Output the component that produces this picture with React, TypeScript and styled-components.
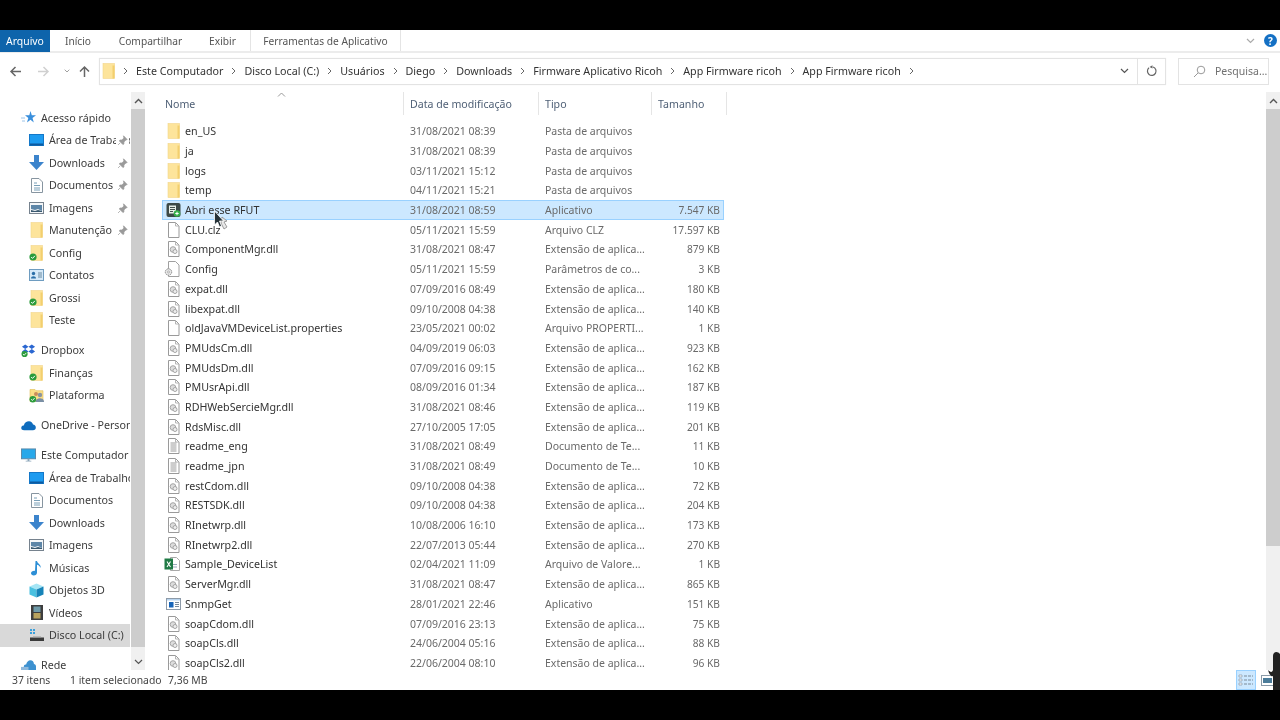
import React from "react";
import styled, { createGlobalStyle } from "styled-components";

const Global = createGlobalStyle`
  html, body { margin: 0; padding: 0; background: #000; }
  body { font-family: "Noto Sans", "Open Sans", "Liberation Sans", sans-serif; }
  * { box-sizing: border-box; }
`;

const Page = styled.div`
  width: 1280px; height: 720px; display: flex; flex-direction: column; overflow: hidden; background: #000; position: relative;
`;
const Letterbox = styled.div<{ $h: number }>`
  height: ${p => p.$h}px; flex: none; background: #000;
`;
const Win = styled.div`
  flex: 1; min-height: 0; display: flex; flex-direction: column; background: #fff; color: #3c3c3c; font-size: 10.7px; position: relative; filter: blur(0.25px);
`;
const TabBar = styled.div`
  height: 23px; flex: none; display: flex; align-items: stretch; border-bottom: 2px solid #ececec; position: relative;
`;
const FileTab = styled.div`
  width: 50px; height: 22px; background: #0e64ab; color: #fff; font-size: 10.4px; display: flex; align-items: center; justify-content: center;
`;
const Tab = styled.div<{ $w: number; $sep?: boolean }>`
  width: ${p => p.$w}px; display: flex; align-items: center; justify-content: center; font-size: 10.2px; color: #555; height: 21px;
  border-right: ${p => (p.$sep ? "1px solid #e4e4e4" : "none")};
`;
const RibbonEnd = styled.div`
  margin-left: auto; display: flex; align-items: center; gap: 9px; padding-right: 3px; height: 21px;
`;
const HelpDot = styled.div`
  width: 13px; height: 13px; border-radius: 50%; background: #1470c4; color: #fff; font-size: 10px; font-weight: 700; display: flex; align-items: center; justify-content: center;
`;
const NavRow = styled.div`
  height: 39px; flex: none; display: flex; align-items: center; padding: 0 11px 3px 9px;
`;
const NavButtons = styled.div`
  width: 90px; flex: none; display: flex; align-items: center; gap: 0;
`;
const NavBtn = styled.div<{ $w: number }>`
  width: ${p => p.$w}px; display: flex; justify-content: center; align-items: center;
`;
const AddressBox = styled.div`
  width: 1067px; height: 27px; flex: none; border: 1px solid #e3e3e3; display: flex; align-items: center; box-shadow: 0 0 1px #eee;
`;
const FolderSlot = styled.div`
  width: 17px; margin-left: 1px; flex: none; display: flex;
`;
const Crumbs = styled.div`
  flex: 1; display: flex; align-items: center; gap: 7px; padding-left: 4px; font-size: 10.7px; color: #333; white-space: nowrap;
`;
const Chev = styled.span`
  display: inline-flex; width: 7px; justify-content: center;
`;
const AddrChevron = styled.div`
  width: 27px; height: 25px; display: flex; align-items: center; justify-content: center; border-right: 1px solid #e3e3e3;
`;
const Refresh = styled.div`
  width: 27px; height: 25px; display: flex; align-items: center; justify-content: center;
`;
const SearchBox = styled.div`
  margin-left: 12px; width: 91px; height: 27px; border: 1px solid #e3e3e3; display: flex; align-items: center; padding-left: 14px; gap: 9px; font-size: 10.5px; color: #707070; white-space: nowrap; overflow: hidden;
`;
const Main = styled.div`
  flex: 1; min-height: 0; display: flex;
`;
const Sidebar = styled.div`
  width: 131px; flex: none; padding-top: 14.5px; overflow: hidden;
`;
const NavGroup = styled.div`
  margin-bottom: 7.5px;
`;
const NavItem = styled.div<{ $level: number; $active?: boolean }>`
  height: 22.5px; width: 130px; display: flex; align-items: center; gap: 5px; white-space: nowrap; overflow: hidden; position: relative;
  padding-left: ${p => (p.$level === 1 ? 21 : 29)}px; background: ${p => (p.$active ? "#d9d9d9" : "transparent")};
`;
const IconSlot = styled.span`
  width: 15px; height: 16px; flex: none; display: inline-flex; align-items: center; justify-content: center;
`;
const Pin = styled.span`
  position: absolute; left: 116px; top: 5px; width: 13px; height: 13px; background: #fff; display: flex; align-items: center; justify-content: center;
`;
const Scroll = styled.div<{ $w: number }>`
  width: ${p => p.$w}px; flex: none; background: #f0f0f0; display: flex; flex-direction: column; align-items: stretch;
`;
const ScrollArrow = styled.div`
  height: 17px; flex: none; display: flex; align-items: center; justify-content: center;
`;
const ScrollThumb = styled.div<{ $h: number }>`
  height: ${p => p.$h}px; flex: none; background: #cdcdcd;
`;
const ScrollRest = styled.div`
  flex: 1;
`;
const ListPane = styled.div`
  flex: 1; min-width: 0; display: flex; flex-direction: column; overflow: hidden;
`;
const Header = styled.div`
  height: 25px; flex: none; padding-left: 20px; display: grid; grid-template-columns: 239px 135px 113px 75px; align-items: stretch; font-size: 10.6px; position: relative; width: 583px;
`;
const HeadCell = styled.div`
  display: flex; align-items: center; padding-left: 6px; border-right: 1px solid #e5e5e5; height: 23px; color: #4e5f75;
  &:first-child { padding-left: 0; }
`;
const SortCaret = styled.span`
  position: absolute; left: 132px; top: 0; line-height: 0;
`;
const Rows = styled.div`
  padding: 4.500px 0 0 17px;
`;
const Row = styled.div<{ $sel?: boolean }>`
  width: 562px; height: 19.7px; display: grid; grid-template-columns: 23px 225px 135px 115px 60px; align-items: center; white-space: nowrap;
  background: ${p => (p.$sel ? "#cce8ff" : "transparent")}; outline: ${p => (p.$sel ? "1px solid #99d1ff" : "none")}; outline-offset: -1px;
`;
const RowIcon = styled.span`
  display: flex; padding-left: 4px; height: 16px; align-items: center;
`;
const Name = styled.span`
  color: #333; font-size: 10.7px;
`;
const Dim = styled.span`
  color: #6a6a6a; font-size: 10.5px; overflow: hidden;
`;
const Size = styled(Dim)`
  text-align: right; font-size: 10.2px;
`;
const Status = styled.div`
  height: 20px; flex: none; display: flex; align-items: center; padding-left: 12px; font-size: 10.4px; color: #444; position: relative;
`;
const StatusCount = styled.span`
  width: 58px;
`;
const StatusSel = styled.span`
  width: 98px; white-space: nowrap;
`;
const ViewBtns = styled.div`
  margin-left: auto; display: flex; align-items: center; gap: 4px; padding-right: 6px; height: 20px;
`;
const ViewBtn = styled.div<{ $on?: boolean }>`
  width: ${p => (p.$on ? 20 : 14)}px; height: 20px; display: flex; align-items: center; justify-content: center;
  background: ${p => (p.$on ? "#cce8ff" : "transparent")}; border: ${p => (p.$on ? "1px solid #99d1ff" : "none")};
`;
const CursorOverlay = styled.svg`
  position: absolute; left: 213px; top: 210px; z-index: 5;
`;
const CornerOverlay = styled.svg`
  position: absolute; left: 1268px; top: 650px; z-index: 5;
`;

const Folder = ({ check }: { check?: boolean }) => (
  <svg width="15" height="16" viewBox="0 0 15 16">
    <rect x="2" y="0.500" width="11.500" height="15" fill="#fde49b" stroke="#f2d68a" strokeWidth=".6" />
    <rect x="11.500" y="2.500" width="2" height="13" fill="#f3cf6e" />
    {check && <Check />}
  </svg>
);
const Check = () => (
  <g>
    <circle cx="4" cy="12" r="3.600" fill="#2c9c3c" />
    <path d="M2.200 12l1.300 1.400 2.400-2.600" fill="none" stroke="#fff" strokeWidth="1" />
  </g>
);
const Doc = ({ children }: { children?: React.ReactNode }) => (
  <svg width="15" height="16" viewBox="0 0 15 16">
    <path d="M2.500 .5h7l3.500 3.500v11.500h-10.500z" fill="#fff" stroke="#9a9a9a" />
    <path d="M9.500 .5v3.500h3.500" fill="none" stroke="#b5b5b5" />
    {children}
  </svg>
);
const Dll = () => (
  <Doc>
    <circle cx="7" cy="8.500" r="2.800" fill="#ddd" stroke="#a5a5a5" />
    <circle cx="9" cy="10.500" r="2" fill="#eee" stroke="#a5a5a5" />
  </Doc>
);
const Txt = () => (
  <Doc>
    <path d="M4.500 5h6M4.500 7h6M4.500 9h6M4.500 11h6M4.500 13h6" stroke="#9a9a9a" />
  </Doc>
);
const Cfg = () => (
  <svg width="17" height="16" viewBox="0 0 17 16" style={{ marginLeft: -2 }}>
    <path d="M4.500 .5h7l3.500 3.500v11.500h-10.500z" fill="#fff" stroke="#a0a0a0" />
    <circle cx="4.500" cy="11" r="3.200" fill="#e8e8e8" stroke="#8a8a8a" strokeDasharray="1.500 .7" />
    <circle cx="4.500" cy="11" r="1" fill="#fff" stroke="#8a8a8a" strokeWidth=".6" />
  </svg>
);
const AppDark = () => (
  <svg width="15" height="16" viewBox="0 0 15 16">
    <rect x=".5" y="1" width="14" height="14" rx="2" fill="#3d4a48" />
    <rect x="3" y="3.500" width="7" height="8" fill="#e8efe8" />
    <path d="M4 5.500h5M4 7.500h5M4 9.500h3" stroke="#45534f" />
    <circle cx="11" cy="11.500" r="3.300" fill="#35b04a" />
    <path d="M9.300 11.500h3.400M11 9.800v3.400" stroke="#fff" />
  </svg>
);
const Excel = () => (
  <svg width="17" height="16" viewBox="0 0 17 16" style={{ marginLeft: -2 }}>
    <path d="M6.500 1.500h6l3 3v10h-9z" fill="#fff" stroke="#a8a8a8" />
    <path d="M9 8.500h4M9 11h4" stroke="#9ab" />
    <rect x=".5" y="2.500" width="8.500" height="11" fill="#1f7a45" />
    <path d="M3 5.500l3.500 5.500M6.500 5.500l-3.500 5.500" stroke="#fff" strokeWidth="1.100" />
  </svg>
);
const Exe = () => (
  <svg width="15" height="14" viewBox="0 0 15 14">
    <rect x=".5" y="1.500" width="14" height="11" fill="#fff" stroke="#8d9aa8" />
    <rect x="1" y="2" width="13" height="1.500" fill="#b8d4ee" />
    <rect x="3" y="5" width="4.500" height="5.500" fill="#1764b8" />
    <path d="M9 5.500h4M9 7.500h4M9 9.500h4" stroke="#7a8a9a" />
  </svg>
);
const Desktop = () => (
  <svg width="15" height="12" viewBox="0 0 15 12">
    <rect x=".5" y=".5" width="14" height="11" fill="#1d9bf0" stroke="#1478c8" />
    <rect x="1" y="9.500" width="13" height="2" fill="#0d5aa0" />
  </svg>
);
const Down = () => (
  <svg width="15" height="15" viewBox="0 0 15 15">
    <path d="M5 0h5v7h5l-7.500 8-7.500-8h5z" fill="#3c84cc" />
  </svg>
);
const Docs = () => (
  <svg width="12" height="15" viewBox="0 0 12 15">
    <path d="M.5 .5h7.500l3.500 3.500v10.500h-11z" fill="#fff" stroke="#8795a0" />
    <path d="M3 5h3M3 7.500h6M3 10h6M3 12h6" stroke="#7aa0b8" />
  </svg>
);
const Images = () => (
  <svg width="15" height="12" viewBox="0 0 15 12">
    <rect x=".5" y=".5" width="14" height="11" fill="#f4f6f8" stroke="#76828e" />
    <path d="M2 3h11v6l-4-2-3 1-4-1z" fill="#5d86a8" />
    <path d="M2 8l4 1 3-1 4 1v1h-11z" fill="#39586f" />
  </svg>
);
const Contacts = () => (
  <svg width="15" height="12" viewBox="0 0 15 12">
    <rect x=".5" y=".5" width="14" height="11" fill="#d5e9f8" stroke="#6e9cc0" />
    <circle cx="4.500" cy="4.500" r="1.700" fill="#2a6fa8" />
    <path d="M2 9.500c0-3 5-3 5 0z" fill="#2a6fa8" />
    <path d="M9 4h4M9 6h4M9 8h4" stroke="#6a8aa0" />
  </svg>
);
const Dropbox = () => (
  <svg width="16" height="15" viewBox="0 0 16 15">
    <path d="M4.500 1L8 3.500 4.500 6 1 3.500zM11.500 1L15 3.500 11.500 6 8 3.500zM4.500 6L8 8.500 4.500 11 1 8.500zM11.500 6L15 8.500 11.500 11 8 8.500z" fill="#2b67d1" />
    <circle cx="3.800" cy="11.200" r="3.300" fill="#2c9c3c" />
    <path d="M2.200 11.200l1.200 1.300 2.200-2.400" fill="none" stroke="#fff" strokeWidth=".9" />
  </svg>
);
const People = () => (
  <svg width="15" height="16" viewBox="0 0 15 16">
    <path d="M1 2.500h5l1 1.200h7v10.800h-13z" fill="#fbdf86" stroke="#e0bd55" strokeWidth=".6" />
    <circle cx="7" cy="7" r="2" fill="#c98d5c" />
    <circle cx="11" cy="8" r="2.200" fill="#8b949e" />
    <path d="M6.500 15c0-5 9-5 8.500 0z" fill="#7a8fa5" />
    <circle cx="3.800" cy="12.200" r="3.300" fill="#2c9c3c" />
    <path d="M2.200 12.200l1.200 1.300 2.200-2.400" fill="none" stroke="#fff" strokeWidth=".9" />
  </svg>
);
const Cloud = () => (
  <svg width="16" height="11" viewBox="0 0 16 11">
    <path d="M3.500 10.500C1 10.500 0 9 .3 7.500.6 6 2 5.400 3 5.500 3.800 2.500 6 1 8.500 1c2.300 0 3.800 1.500 4.300 3.300 1.800.1 3 1.500 3 3.200 0 1.800-1.200 3-3 3z" fill="#0f6cbd" />
  </svg>
);
const Pc = () => (
  <svg width="16" height="15" viewBox="0 0 16 15">
    <rect x=".5" y=".5" width="15" height="10.500" fill="#28a8ea" stroke="#5a87a8" />
    <path d="M5 13h6v1h-6z M7 11h2v2h-2z" fill="#8ba6ba" />
  </svg>
);
const Music = () => (
  <svg width="13" height="16" viewBox="0 0 13 16">
    <path d="M5.500 1h1.500c.4 2.500 4.500 3.500 3.500 7-.5-2-2.200-3-3.500-3.200v8c0 1.500-1.500 2.700-3.200 2.700-1.700 0-2.800-1-2.800-2.200 0-1.400 1.500-2.500 3.300-2.500.3 0 .5 0 .7.100z" fill="#2d8fd6" />
  </svg>
);
const Cube = () => (
  <svg width="15" height="15" viewBox="0 0 15 15">
    <path d="M7.500 .5l7 3-7 3-7-3z" fill="#a5e5f5" />
    <path d="M.5 3.500l7 3v8l-7-3z" fill="#49c0e0" />
    <path d="M14.500 3.500l-7 3v8l7-3z" fill="#1683b8" />
  </svg>
);
const Film = () => (
  <svg width="12" height="15" viewBox="0 0 12 15">
    <rect x="0" y="0" width="12" height="15" fill="#3e3e3e" />
    <rect x="2.500" y="1.500" width="7" height="5.500" fill="#6f9aa8" />
    <rect x="2.500" y="8" width="7" height="5.500" fill="#b9a35e" />
  </svg>
);
const Disk = () => (
  <svg width="15" height="14" viewBox="0 0 15 14">
    <path d="M1 1h2v2h-2zM4 1h2v2h-2zM1 4h2v2h-2zM4 4h2v2h-2z" fill="#3ba0dc" />
    <rect x="1" y="9.500" width="14" height="3.500" fill="#3a3a3a" />
    <rect x="4" y="8.500" width="8" height="1" fill="#9a9a9a" />
  </svg>
);
const Net = () => (
  <svg width="16" height="13" viewBox="0 0 16 13">
    <path d="M3 12V7.500C3 5.500 5 5.500 5.500 5.500 6 3 8 1 10 1c2.300 0 3.800 1.800 3.800 4 1.200.3 2.200 1.200 2.200 2.600V12z" fill="#3d91d0" />
    <rect x="0" y="8" width="8" height="4" fill="#8fb9dc" />
  </svg>
);
const Star = () => (
  <svg width="15" height="15" viewBox="0 0 15 15">
    <path d="M9.500 1l1.300 4.300H15l-3.500 2.700 1.300 4.500-3.300-2.700-3.500 2.700 1.300-4.500L4 5.300h4.300z" fill="#3a8fdc" />
    <path d="M0 8h4M1 11h3" stroke="#9cc4e8" />
  </svg>
);
const PinGlyph = () => (
  <svg width="11" height="11" viewBox="0 0 11 11">
    <path d="M6.500 .8l3.700 3.700-1.300.5-2 2 0 2-1 .5-3.500-3.500.5-1 2-0 2-2z M3 8l-2 2" fill="#9a9a9a" stroke="#9a9a9a" strokeWidth=".7" />
  </svg>
);
const Sep = () => (
  <Chev>
    <svg width="5" height="8" viewBox="0 0 5 8"><path d="M1 1l3 3-3 3" fill="none" stroke="#666" /></svg>
  </Chev>
);
const Vee = ({ c = "#666", w = 9 }: { c?: string; w?: number }) => (
  <svg width={w} height="6" viewBox="0 0 9 6"><path d="M1 1l3.500 3.500L8 1" fill="none" stroke={c} strokeWidth="1.200" /></svg>
);
const Up = ({ c = "#555" }: { c?: string }) => (
  <svg width="9" height="6" viewBox="0 0 9 6"><path d="M1 5l3.500-3.500L8 5" fill="none" stroke={c} strokeWidth="1.400" /></svg>
);
const Arrow = ({ dir, c }: { dir: "l" | "r" | "u"; c: string }) => (
  <svg width="13" height="13" viewBox="0 0 13 13" style={{ transform: dir === "l" ? "none" : dir === "r" ? "rotate(180deg)" : "rotate(90deg)" }}>
    <path d="M12 6.500H2M6.500 2L2 6.500 6.500 11" fill="none" stroke={c} strokeWidth="1.500" />
  </svg>
);

const kinds: Record<string, React.ReactNode> = {
  f: <Folder />, c: <Doc />, d: <Dll />, t: <Txt />, g: <Cfg />, a: <AppDark />, x: <Excel />, e: <Exe />,
};

const files: [string, string, string, string, string, string?][] = [
  ["f", "en_US", "31/08/2021 08:39", "Pasta de arquivos", ""],
  ["f", "ja", "31/08/2021 08:39", "Pasta de arquivos", ""],
  ["f", "logs", "03/11/2021 15:12", "Pasta de arquivos", ""],
  ["f", "temp", "04/11/2021 15:21", "Pasta de arquivos", ""],
  ["a", "Abri esse RFUT", "31/08/2021 08:59", "Aplicativo", "7.547 KB", "s"],
  ["c", "CLU.clz", "05/11/2021 15:59", "Arquivo CLZ", "17.597 KB"],
  ["d", "ComponentMgr.dll", "31/08/2021 08:47", "Extensão de aplica...", "879 KB"],
  ["g", "Config", "05/11/2021 15:59", "Parâmetros de co...", "3 KB"],
  ["d", "expat.dll", "07/09/2016 08:49", "Extensão de aplica...", "180 KB"],
  ["d", "libexpat.dll", "09/10/2008 04:38", "Extensão de aplica...", "140 KB"],
  ["c", "oldJavaVMDeviceList.properties", "23/05/2021 00:02", "Arquivo PROPERTI...", "1 KB"],
  ["d", "PMUdsCm.dll", "04/09/2019 06:03", "Extensão de aplica...", "923 KB"],
  ["d", "PMUdsDm.dll", "07/09/2016 09:15", "Extensão de aplica...", "162 KB"],
  ["d", "PMUsrApi.dll", "08/09/2016 01:34", "Extensão de aplica...", "187 KB"],
  ["d", "RDHWebSercieMgr.dll", "31/08/2021 08:46", "Extensão de aplica...", "119 KB"],
  ["d", "RdsMisc.dll", "27/10/2005 17:05", "Extensão de aplica...", "201 KB"],
  ["t", "readme_eng", "31/08/2021 08:49", "Documento de Te...", "11 KB"],
  ["t", "readme_jpn", "31/08/2021 08:49", "Documento de Te...", "10 KB"],
  ["d", "restCdom.dll", "09/10/2008 04:38", "Extensão de aplica...", "72 KB"],
  ["d", "RESTSDK.dll", "09/10/2008 04:38", "Extensão de aplica...", "204 KB"],
  ["d", "RInetwrp.dll", "10/08/2006 16:10", "Extensão de aplica...", "173 KB"],
  ["d", "RInetwrp2.dll", "22/07/2013 05:44", "Extensão de aplica...", "270 KB"],
  ["x", "Sample_DeviceList", "02/04/2021 11:09", "Arquivo de Valore...", "1 KB"],
  ["d", "ServerMgr.dll", "31/08/2021 08:47", "Extensão de aplica...", "865 KB"],
  ["e", "SnmpGet", "28/01/2021 22:46", "Aplicativo", "151 KB"],
  ["d", "soapCdom.dll", "07/09/2016 23:13", "Extensão de aplica...", "75 KB"],
  ["d", "soapCls.dll", "24/06/2004 05:16", "Extensão de aplica...", "88 KB"],
  ["d", "soapCls2.dll", "22/06/2004 08:10", "Extensão de aplica...", "96 KB"],
];

type Nav = { icon: React.ReactNode; label: string; level: number; pin?: boolean; active?: boolean };
const groups: Nav[][] = [
  [
    { icon: <Star />, label: "Acesso rápido", level: 1 },
    { icon: <Desktop />, label: "Área de Trabalho", level: 2, pin: true },
    { icon: <Down />, label: "Downloads", level: 2, pin: true },
    { icon: <Docs />, label: "Documentos", level: 2, pin: true },
    { icon: <Images />, label: "Imagens", level: 2, pin: true },
    { icon: <Folder />, label: "Manutenção", level: 2, pin: true },
    { icon: <Folder check />, label: "Config", level: 2 },
    { icon: <Contacts />, label: "Contatos", level: 2 },
    { icon: <Folder check />, label: "Grossi", level: 2 },
    { icon: <Folder />, label: "Teste", level: 2 },
  ],
  [
    { icon: <Dropbox />, label: "Dropbox", level: 1 },
    { icon: <Folder check />, label: "Finanças", level: 2 },
    { icon: <People />, label: "Plataforma", level: 2 },
  ],
  [{ icon: <Cloud />, label: "OneDrive - Personal", level: 1 }],
  [
    { icon: <Pc />, label: "Este Computador", level: 1 },
    { icon: <Desktop />, label: "Área de Trabalho", level: 2 },
    { icon: <Docs />, label: "Documentos", level: 2 },
    { icon: <Down />, label: "Downloads", level: 2 },
    { icon: <Images />, label: "Imagens", level: 2 },
    { icon: <Music />, label: "Músicas", level: 2 },
    { icon: <Cube />, label: "Objetos 3D", level: 2 },
    { icon: <Film />, label: "Vídeos", level: 2 },
    { icon: <Disk />, label: "Disco Local (C:)", level: 2, active: true },
  ],
  [{ icon: <Net />, label: "Rede", level: 1 }],
];

const crumbs = ["Este Computador", "Disco Local (C:)", "Usuários", "Diego", "Downloads", "Firmware Aplicativo Ricoh", "App Firmware ricoh", "App Firmware ricoh"];

export default function App() {
  return (
    <Page>
      <Global />
      <Letterbox $h={30} />
      <Win>
        <TabBar>
          <FileTab>Arquivo</FileTab>
          <Tab $w={56}>Início</Tab>
          <Tab $w={89}>Compartilhar</Tab>
          <Tab $w={56} $sep>Exibir</Tab>
          <Tab $w={150} $sep>Ferramentas de Aplicativo</Tab>
          <RibbonEnd>
            <Vee c="#aaa" />
            <HelpDot>?</HelpDot>
          </RibbonEnd>
        </TabBar>
        <NavRow>
          <NavButtons>
            <NavBtn $w={14}><Arrow dir="l" c="#666" /></NavBtn>
            <NavBtn $w={42}><Arrow dir="r" c="#d0d0d0" /></NavBtn>
            <NavBtn $w={6}><Vee c="#888" w={7} /></NavBtn>
            <NavBtn $w={30}><Arrow dir="u" c="#666" /></NavBtn>
          </NavButtons>
          <AddressBox>
            <FolderSlot><Folder /></FolderSlot>
            <Crumbs>
              {crumbs.map((c, i) => (
                <React.Fragment key={i}>
                  <Sep />
                  <span>{c}</span>
                </React.Fragment>
              ))}
              <Sep />
            </Crumbs>
            <AddrChevron><Vee c="#555" w={9} /></AddrChevron>
            <Refresh>
              <svg width="12" height="12" viewBox="0 0 12 12">
                <path d="M3 2.800A4.300 4.300 0 1 0 7 2" fill="none" stroke="#666" strokeWidth="1.200" />
                <path d="M6.500 .3v3.200l-3-1.400z" fill="#666" />
              </svg>
            </Refresh>
          </AddressBox>
          <SearchBox>
            <svg width="13" height="13" viewBox="0 0 13 13">
              <circle cx="8" cy="5" r="3.800" fill="none" stroke="#999" />
              <path d="M5 8l-4 4" stroke="#999" />
            </svg>
            <span>Pesquisa...</span>
          </SearchBox>
        </NavRow>
        <Main>
          <Sidebar>
            {groups.map(g => (
              <NavGroup key={g[0].label}>
                {g.map(n => (
                  <NavItem key={n.label} $level={n.level} $active={n.active}>
                    <IconSlot>{n.icon}</IconSlot>
                    <span>{n.label}</span>
                    {n.pin && <Pin><PinGlyph /></Pin>}
                  </NavItem>
                ))}
              </NavGroup>
            ))}
          </Sidebar>
          <Scroll $w={14}>
            <ScrollArrow><Up /></ScrollArrow>
            <ScrollThumb $h={538} />
            <ScrollRest />
            <ScrollArrow><Vee c="#555" /></ScrollArrow>
          </Scroll>
          <ListPane>
            <Header>
              <HeadCell>Nome</HeadCell>
              <HeadCell>Data de modificação</HeadCell>
              <HeadCell>Tipo</HeadCell>
              <HeadCell>Tamanho</HeadCell>
              <SortCaret><svg width="9" height="5" viewBox="0 0 9 5"><path d="M1 4.500l3.500-3.500L8 4.500" fill="none" stroke="#999" /></svg></SortCaret>
            </Header>
            <Rows>
              {files.map(f => (
                <Row key={f[1]} $sel={f[5] === "s"}>
                  <RowIcon>{kinds[f[0]]}</RowIcon>
                  <Name>{f[1]}</Name>
                  <Dim>{f[2]}</Dim>
                  <Dim>{f[3]}</Dim>
                  <Size>{f[4]}</Size>
                </Row>
              ))}
            </Rows>
          </ListPane>
          <Scroll $w={14}>
            <ScrollArrow><Up /></ScrollArrow>
            <ScrollThumb $h={437} />
            <ScrollRest />
          </Scroll>
        </Main>
        <Status>
          <StatusCount>37 itens</StatusCount>
          <StatusSel>1 item selecionado</StatusSel>
          <span>7,36 MB</span>
          <ViewBtns>
            <ViewBtn $on>
              <svg width="16" height="14" viewBox="0 0 16 14">
                <path d="M1 2h3v2h-3zM1 6h3v2h-3zM1 10h3v2h-3z" fill="#fff" stroke="#8a9aa8" strokeWidth=".7" />
                <path d="M6 3h9M6 7h9M6 11h9" stroke="#7a8a98" strokeDasharray="3 1" />
              </svg>
            </ViewBtn>
            <ViewBtn>
              <svg width="13" height="11" viewBox="0 0 13 11">
                <rect x=".5" y=".5" width="12" height="10" fill="#fff" stroke="#8a9aa8" />
                <rect x="2" y="3" width="9" height="5" fill="#4b7c9a" />
              </svg>
            </ViewBtn>
          </ViewBtns>
        </Status>
      </Win>
      <Letterbox $h={30} />
      <CursorOverlay width="16" height="22" viewBox="0 0 16 22">
        <path d="M8 13l3 6 3-2-3-5 3-1-5-4z" fill="#e8e8e8" stroke="#888" strokeWidth=".8" />
        <path d="M1.500 1v14l3-3 2 5 2-1-2-5h4z" fill="#263238" stroke="#fff" strokeWidth=".8" />
      </CursorOverlay>
      <CornerOverlay width="12" height="40" viewBox="0 0 12 40">
        <path d="M0 20c2 2 4 3 5 0V6c0-5 5-5 7-2v36H5V26c-2 1-4-2-5-6z" fill="#222" />
      </CornerOverlay>
    </Page>
  );
}
